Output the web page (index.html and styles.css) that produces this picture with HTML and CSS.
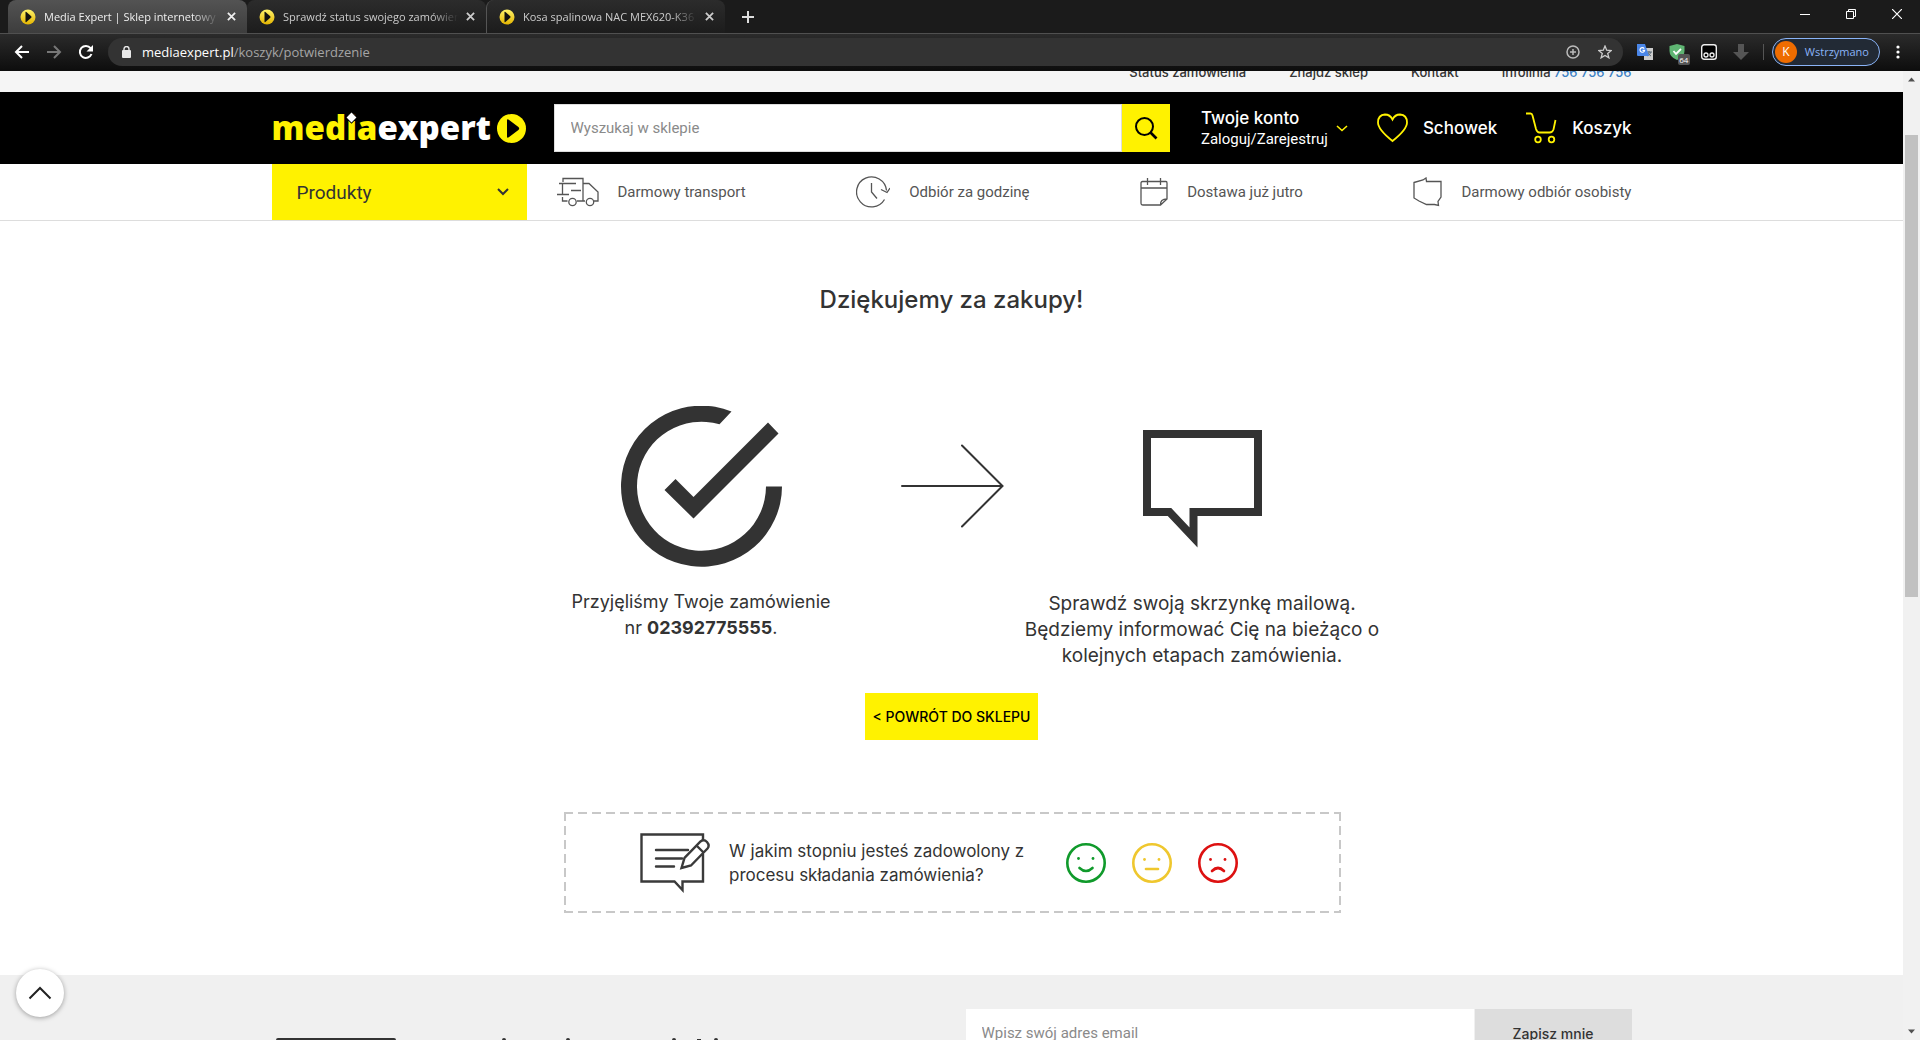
FILE: index.html
```html
<!DOCTYPE html>
<html lang="pl">
<head>
<meta charset="utf-8">
<title>Media Expert | Sklep internetowy</title>
<link rel="stylesheet" href="styles.css">
</head>
<body>
<svg class="defs" width="0" height="0" aria-hidden="true">
  <defs>
    <linearGradient id="gold" x1="0" y1="0" x2="0" y2="1"><stop offset="0" stop-color="#fff36b"/><stop offset="1" stop-color="#e3b400"/></linearGradient>
    <symbol id="favicon" viewBox="0 0 16 16"><circle cx="8" cy="8" r="7.5" fill="url(#gold)"/><path d="M5.5 3.4q0-.9.9-.4l4.8 4.3q.7.7 0 1.400L6.400 13q-.9.500-.9-.4z" fill="#111"/></symbol>
    <symbol id="cross" viewBox="0 0 10 10"><path d="M1 1l8 8M9 1l-8 8" stroke="currentColor" stroke-width="2" fill="none"/></symbol>
  </defs>
</svg>

<div class="browser">
  <div class="tabstrip">
    <div class="tab tab-active"><svg class="favicon"><use href="#favicon"/></svg><span class="tab-title">Media Expert | Sklep internetowy</span><button class="plain" aria-label="Zamknij kartę"><svg width="9" height="9"><use href="#cross"/></svg></button></div>
    <div class="tab"><svg class="favicon"><use href="#favicon"/></svg><span class="tab-title">Sprawdź status swojego zamówienia</span><button class="plain" aria-label="Zamknij kartę"><svg width="9" height="9"><use href="#cross"/></svg></button></div>
    <div class="tab tab-last"><svg class="favicon"><use href="#favicon"/></svg><span class="tab-title">Kosa spalinowa NAC MEX620-K36</span><button class="plain" aria-label="Zamknij kartę"><svg width="9" height="9"><use href="#cross"/></svg></button></div>
    <button class="plain new-tab" aria-label="Nowa karta"><svg width="12" height="12" viewBox="0 0 12 12"><path d="M6 0v12M0 6h12" stroke="#ddd" stroke-width="2"/></svg></button>
    <div class="window-buttons">
      <button class="plain" aria-label="Minimalizuj"><svg width="10" height="10" viewBox="0 0 10 10"><path d="M0 5.500h10" stroke="#fff"/></svg></button>
      <button class="plain" aria-label="Przywróć"><svg width="10" height="10" viewBox="0 0 10 10"><path d="M.5 2.500h7v7h-7zM2.500 2.500v-2h7v7h-2" fill="none" stroke="#fff"/></svg></button>
      <button class="plain" aria-label="Zamknij"><svg width="10" height="10" viewBox="0 0 10 10"><path d="M0 0l10 10M10 0L0 10" stroke="#fff" stroke-width="1.200"/></svg></button>
    </div>
  </div>

  <div class="toolbar">
    <div class="history">
      <button class="plain" aria-label="Wstecz"><svg width="16" height="14" viewBox="0 0 16 14"><path d="M15 7H2M8 1L2 7l6 6" fill="none" stroke="#fff" stroke-width="2"/></svg></button>
      <button class="plain" aria-label="Dalej"><svg width="16" height="14" viewBox="0 0 16 14"><path d="M1 7h13M8 1l6 6-6 6" fill="none" stroke="#777" stroke-width="2"/></svg></button>
      <button class="plain" aria-label="Odśwież"><svg width="16" height="16" viewBox="0 0 16 16"><path d="M13.500 10A6 6 0 1 1 12.600 4.200" fill="none" stroke="#fff" stroke-width="2"/><path d="M15 1v6.500H8.500z" fill="#fff"/></svg></button>
    </div>
    <div class="address">
      <svg width="9" height="12" viewBox="0 0 9 12"><rect y="4" width="9" height="8" rx="1" fill="#e8e8e8"/><path d="M2 5V3a2.500 2.500 0 0 1 5 0v2" fill="none" stroke="#e8e8e8" stroke-width="1.400"/></svg>
      <span class="url"><span class="host">mediaexpert.pl</span>/koszyk/potwierdzenie</span>
      <svg width="14" height="14" viewBox="0 0 14 14"><circle cx="7" cy="7" r="6" fill="none" stroke="#bbb" stroke-width="1.500"/><path d="M7 4v6M4 7h6" stroke="#bbb" stroke-width="1.500"/></svg>
      <svg width="14" height="14" viewBox="0 0 14 14"><path d="M7 1l1.700 4.200 4.500.3-3.500 2.900 1.200 4.400L7 10.400l-3.900 2.400 1.200-4.400L.8 5.500l4.500-.3z" fill="none" stroke="#ccc" stroke-width="1.300"/></svg>
    </div>
    <div class="extensions">
      <svg width="16" height="16" viewBox="0 0 16 16"><rect x="7" y="4" width="9" height="12" fill="#ccc"/><path d="M9 8h6M12 7v2M14 8q-1 3-4 4M11 9q1 2 3 3" stroke="#5b6a75" fill="none"/><path d="M0 0h8l4 12H1q-1 0-1-1z" fill="#4a86e8"/><path d="M7.200 4.600a2.300 2.300 0 1 0 .4 1.700H5.500" fill="none" stroke="#fff" stroke-width="1.200"/></svg>
      <span class="shield"><svg width="16" height="16" viewBox="0 0 16 16"><path d="M8 0l7.500 2v5q0 6-7.500 9Q.5 13 .5 7V2z" fill="#5fb573"/><path d="M4.500 7l2.500 3 5-5" fill="none" stroke="#fff" stroke-width="1.800"/></svg><span class="badge">64</span></span>
      <svg width="16" height="16" viewBox="0 0 16 16"><rect x=".7" y=".7" width="14.600" height="14.600" rx="2.500" fill="#000" stroke="#eee" stroke-width="1.400"/><circle cx="5" cy="11" r="2" fill="none" stroke="#eee" stroke-width="1.300"/><circle cx="11" cy="11" r="2" fill="none" stroke="#eee" stroke-width="1.300"/></svg>
      <svg width="16" height="16" viewBox="0 0 16 16"><path d="M5 0h6v8h5l-8 8-8-8h5z" fill="#555"/></svg>
    </div>
    <button class="profile"><span class="avatar">K</span>Wstrzymano</button>
    <button class="plain" aria-label="Menu"><svg width="4" height="14" viewBox="0 0 4 14"><circle cx="2" cy="2" r="1.600" fill="#fff"/><circle cx="2" cy="7" r="1.600" fill="#fff"/><circle cx="2" cy="12" r="1.600" fill="#fff"/></svg></button>
  </div>
</div>

<div class="viewport">
  <div class="page">
    <div class="topbar"><nav class="wrap topbar-links">
      <a href="#">Status zamówienia</a><a href="#">Znajdź sklep</a><a href="#">Kontakt</a><span>Infolinia <a class="phone" href="tel:756756756">756 756 756</a></span>
    </nav></div>

    <header class="header"><div class="wrap header-row">
      <a class="logo" href="#"><span class="logo-text"><span class="logo-media">med<span class="logo-i">i</span>a</span>expert</span><svg width="29" height="29" viewBox="0 0 29 29"><circle cx="14.500" cy="14.500" r="14.500" fill="#fff200"/><path d="M10 6.500q0-2 1.800-.8l9.600 7.300q1.600 1.500 0 3l-9.600 7.300q-1.800 1.200-1.800-.8z" fill="#000"/></svg></a>
      <form class="search">
        <input type="text" placeholder="Wyszukaj w sklepie" aria-label="Wyszukaj w sklepie">
        <button type="button" aria-label="Szukaj"><svg width="24" height="24" viewBox="0 0 24 24"><circle cx="10.500" cy="10.500" r="8.500" fill="none" stroke="#000" stroke-width="2"/><path d="M16.500 16.500l6 6" stroke="#000" stroke-width="2.600"/></svg></button>
      </form>
      <a class="account" href="#"><span><b>Twoje konto</b><small>Zaloguj/Zarejestruj</small></span><svg width="12" height="7" viewBox="0 0 12 7"><path d="M1 1l5 4.500L11 1" fill="none" stroke="#fff200" stroke-width="1.600"/></svg></a>
      <a class="shortcut" href="#"><svg width="31" height="30" viewBox="0 0 31 30"><path d="M15.500 28Q1 16.500 1 9.500 1 2 8 1.500q5 0 7.500 5Q18 1.500 23 1.500 30 2 30 9.500q0 7-14.500 18.500z" fill="none" stroke="#fff200" stroke-width="1.800"/></svg>Schowek</a>
      <a class="shortcut" href="#"><svg width="31" height="32" viewBox="0 0 31 32"><path d="M0 1.500h4.500q1.500 0 2 2l3.500 13.500q1 3.500 3.500 3.500h10q3 0 4-3l2-9.500" fill="none" stroke="#fff200" stroke-width="1.800"/><circle cx="12" cy="27.500" r="2.800" fill="none" stroke="#fff200" stroke-width="1.800"/><circle cx="25.500" cy="27.500" r="2.800" fill="none" stroke="#fff200" stroke-width="1.800"/></svg>Koszyk</a>
    </div></header>

    <div class="navbar"><div class="wrap navbar-row">
      <button class="products">Produkty<svg width="12" height="8" viewBox="0 0 12 8"><path d="M1 1l5 5 5-5" fill="none" stroke="#333" stroke-width="2"/></svg></button>
      <ul class="benefits">
        <li><svg width="42" height="30" viewBox="0 0 42 30"><path d="M6 5V1.500h20v22.500M2 6.500h17M5.500 6.500v11M0 17.500h12M14 13.500h10M5.500 20V24h5M20 24h8M26 6.500h6l9 8.500v9h-4" fill="none" stroke="#555" stroke-width="1.300"/><circle cx="15.500" cy="25" r="3.700" fill="#fff" stroke="#555" stroke-width="1.300"/><circle cx="33" cy="25" r="3.700" fill="#fff" stroke="#555" stroke-width="1.300"/></svg>Darmowy transport</li>
        <li><svg width="34" height="32" viewBox="0 0 34 32"><path d="M28.500 23.500A15 15 0 1 1 30.500 14.500M25 13.500l6 3 3-4.500M15.500 7v9l5.500 6.500" fill="none" stroke="#555" stroke-width="1.300"/></svg>Odbiór za godzinę</li>
        <li><svg width="28" height="28" viewBox="0 0 28 28"><path d="M1 25V5q0-1.500 1.500-1.500H26q1 0 1 1.500v16l-6.500 6H3q-2 0-2-2zM1 10h26M7.500 0v7M20.500 0v7M20.500 27q-.5-6 6.500-6" fill="none" stroke="#555" stroke-width="1.300"/></svg>Dostawa już jutro</li>
        <li><svg width="29" height="30" viewBox="0 0 29 30"><path d="M1 5.500L10 3l3-2 .500 3.500h14.500v15.500l-3 4.500.500 4-4-1h-8L6 24l-5-3z" fill="none" stroke="#555" stroke-width="1.300"/></svg>Darmowy odbiór osobisty</li>
      </ul>
    </div></div>

    <main class="main">
      <h1>Dziękujemy za zakupy!</h1>
      <div class="steps">
        <section class="step">
          <div class="step-art"><svg width="161" height="161" viewBox="0 0 161 161" fill="#333"><path d="M110.500 5.500A80.500 80.500 0 1 0 161 80.500H145A64.500 64.500 0 1 1 98.500 18.300z"/><path d="M147 16.500l10.500 11L72.500 112.500 43.500 84l11-11 18 18z"/></svg></div>
          <p>Przyjęliśmy Twoje zamówienie<br>nr <b>02392775555</b>.</p>
        </section>
        <svg class="arrow" width="103" height="84" viewBox="0 0 103 84"><path d="M1 42h100M61 1.500L101.500 42 61 82.500" fill="none" stroke="#333" stroke-width="2" stroke-linecap="round"/></svg>
        <section class="step step-mail">
          <div class="step-art"><svg width="119" height="118" viewBox="0 0 119 118"><path d="M4 4h111v78H50.500v25.500L26.500 82H4z" fill="none" stroke="#333" stroke-width="8"/></svg></div>
          <p>Sprawdź swoją skrzynkę mailową.<br>Będziemy informować Cię na bieżąco o<br>kolejnych etapach zamówienia.</p>
        </section>
      </div>
      <a class="back" href="#">&lt; POWRÓT DO SKLEPU</a>
      <section class="survey">
        <svg width="70" height="60" viewBox="0 0 70 60" fill="none" stroke="#3a3a3a" stroke-width="2.400" stroke-linecap="round"><path d="M63 8.500V1.500H1.500v47h33l8 8.500v-8.500H63V21" stroke-linecap="butt" stroke-linejoin="miter"/><path d="M16 17h32M16 25.500h26M16 33.500h18"/><path d="M41.500 35l3-10L60.500 8.500q3.500-2.500 6.500.5 3 3.500.5 6.500L51 32.500zM56.500 12.500l7 7" fill="#fff"/></svg>
        <p>W jakim stopniu jesteś zadowolony z<br>procesu składania zamówienia?</p>
        <div class="faces">
          <button class="plain face-good" aria-label="Zadowolony"><svg width="40" height="40" viewBox="0 0 40 40" fill="none" stroke="currentColor" stroke-width="2.600"><circle cx="20" cy="20" r="18.700"/><path d="M13.500 25q6.500 6 13 0" stroke-linecap="round"/><circle cx="12.500" cy="15.500" r="1.400" fill="currentColor" stroke="none"/><circle cx="27" cy="15.500" r="1.400" fill="currentColor" stroke="none"/></svg></button>
          <button class="plain face-ok" aria-label="Neutralny"><svg width="40" height="40" viewBox="0 0 40 40" fill="none" stroke="currentColor" stroke-width="2.600"><circle cx="20" cy="20" r="18.700"/><path d="M14 26h12" stroke-linecap="round"/><circle cx="12.500" cy="16.500" r="1.400" fill="currentColor" stroke="none"/><circle cx="27" cy="16.500" r="1.400" fill="currentColor" stroke="none"/></svg></button>
          <button class="plain face-bad" aria-label="Niezadowolony"><svg width="40" height="40" viewBox="0 0 40 40" fill="none" stroke="currentColor" stroke-width="2.600"><circle cx="20" cy="20" r="18.700"/><path d="M14 28q6-6 12 0" stroke-linecap="round"/><circle cx="12.500" cy="16.500" r="1.400" fill="currentColor" stroke="none"/><circle cx="27" cy="16.500" r="1.400" fill="currentColor" stroke="none"/></svg></button>
        </div>
      </section>
    </main>

    <footer class="newsletter"><div class="wrap newsletter-row">
      <svg class="newsletter-art" width="454" height="60" viewBox="0 0 454 60"><rect x="5" y="1" width="118" height="70" rx="1" fill="none" stroke="#333" stroke-width="2"/><g fill="#333"><circle cx="232" cy="2" r="2"/><circle cx="296" cy="2" r="2"/><circle cx="402" cy="2" r="2"/><path d="M425 1h4v1h-4z"/><circle cx="444" cy="2" r="2"/></g></svg>
      <form class="subscribe">
        <input type="email" placeholder="Wpisz swój adres email" aria-label="Wpisz swój adres email">
        <button type="button">Zapisz mnie</button>
      </form>
    </div></footer>
  </div>

  <div class="scrollbar" aria-hidden="true">
    <svg width="17" height="17" viewBox="0 0 17 17"><path d="M5 10.500l3.500-4 3.500 4z" fill="#505050"/></svg>
    <div class="track"><div class="thumb"></div></div>
    <svg width="17" height="17" viewBox="0 0 17 17"><path d="M5 6.500l3.500 4 3.500-4z" fill="#505050"/></svg>
  </div>
  <button class="to-top" aria-label="Do góry"><svg width="24" height="14" viewBox="0 0 24 14"><path d="M1.500 12.500L12 2l10.500 10.500" fill="none" stroke="#222" stroke-width="2"/></svg></button>
</div>
</body>
</html>
```
FILE: styles.css
```css
* { box-sizing: border-box; }
body {
  margin: 0;
  height: 100vh;
  display: flex;
  flex-direction: column;
  overflow: hidden;
  font-family: Inter, "Open Sans", sans-serif;
  color: #333;
  background: #fff;
}
svg { display: block; flex: none; }
a { color: inherit; text-decoration: none; }
p, h1, ul { margin: 0; padding: 0; }
button { font: inherit; color: inherit; cursor: pointer; }
.defs { position: absolute; }
.plain { display: block; flex: none; border: 0; padding: 0; background: none; }

/* browser frame */
.browser { flex: none; font-family: "Open Sans", sans-serif; }
.tabstrip {
  display: flex;
  align-items: flex-end;
  height: 33px;
  padding-left: 8px;
  background: #1b1b1b;
  color: #ccc;
}
.tab {
  display: flex;
  align-items: center;
  gap: 8px;
  width: 239px;
  height: 33px;
  padding: 0 11px 0 12px;
  border-radius: 8px 8px 0 0;
  background: linear-gradient(#2c2c2c, #1c1c1c);
  font-size: 11px;
}
.tab-active { background: linear-gradient(#535353, #3d3d3d); color: #eee; }
.tab-last { border-left: 1px solid #555; }
.favicon { width: 16px; height: 16px; }
.tab-title {
  flex: 1;
  overflow: hidden;
  white-space: nowrap;
  mask-image: linear-gradient(90deg, #000 85%, transparent);
}
.new-tab { align-self: center; margin-left: 17px; }
.window-buttons { display: flex; gap: 36px; margin: 0 18px 14px auto; }
.toolbar {
  display: flex;
  align-items: center;
  height: 38px;
  padding: 0 20px 2px 14px;
  border-top: 1px solid #505050;
  background: linear-gradient(#2b2b2b, #0d0d0d);
}
.history { display: flex; align-items: center; gap: 16px; margin-right: 14px; }
.address {
  flex: 1;
  display: flex;
  align-items: center;
  gap: 18px;
  height: 28px;
  padding: 0 11px 0 14px;
  border-radius: 14px;
  background: #333;
}
.url { flex: 1; margin-left: -7px; font-size: 13px; color: #a5a5a5; }
.host { color: #fff; }
.extensions {
  display: flex;
  gap: 16px;
  margin-left: 14px;
  padding-right: 14px;
  border-right: 1px solid #555;
}
.shield { position: relative; }
.badge {
  position: absolute;
  left: 9px;
  top: 10px;
  width: 12px;
  border-radius: 2px;
  background: #555;
  color: #fff;
  font-size: 8px;
  line-height: 11px;
  text-align: center;
}
.profile {
  display: flex;
  align-items: center;
  gap: 8px;
  height: 28px;
  margin: 0 16px 0 8px;
  padding: 0 10px 0 2px;
  border: 1px solid #8ab4f8;
  border-radius: 14px;
  background: #222a35;
  color: #8ab4f8;
  font-size: 11px;
}
.avatar {
  width: 22px;
  height: 22px;
  border-radius: 50%;
  background: #ee6c00;
  color: #fff;
  font-size: 12px;
  line-height: 22px;
}

/* page area */
.viewport { position: relative; flex: 1; min-height: 0; display: flex; overflow: hidden; }
.page { flex: 1; min-width: 0; }
.wrap { max-width: 1360px; margin: 0 auto; }
.topbar { height: 21px; overflow: hidden; background: #f5f5f5; }
.topbar-links {
  display: flex;
  justify-content: flex-end;
  gap: 43px;
  margin-top: -9px;
  font-size: 13px;
  font-weight: 500;
  line-height: 20px;
}
.phone { color: #3b7fc4; }

.header { background: #000; color: #fff; }
.header-row { display: flex; align-items: center; height: 72px; }
.logo { display: flex; align-items: center; gap: 6px; width: 282px; }
.logo-text { font: 800 33px/40px "Open Sans", sans-serif; }
.logo-media { color: #fff200; }
.logo-i { position: relative; }
.logo-i::before {
  content: "";
  position: absolute;
  left: 2px;
  top: 9px;
  width: 7px;
  height: 7px;
  background: #fff;
  box-shadow: 0 0 0 1px #000;
  transform: rotate(45deg);
}
.search { flex: 1; display: flex; height: 48px; }
.search input {
  flex: 1;
  min-width: 0;
  padding: 0 16px;
  border: 1px solid #ddd;
  font: 15px Roboto, sans-serif;
}
input::placeholder { color: #8a8a8a; opacity: 1; }
.search button {
  display: grid;
  place-items: center;
  width: 48px;
  padding: 0;
  border: 0;
  background: #fff200;
}
.account { display: flex; align-items: center; gap: 8px; margin-left: 31px; }
.account b { display: block; font-size: 17px; font-weight: 500; line-height: 22px; }
.account small { display: block; font: 15px/20px Roboto, sans-serif; }
.shortcut {
  display: flex;
  align-items: center;
  gap: 15px;
  margin-left: 29px;
  font-size: 17px;
  font-weight: 500;
}

.navbar { border-bottom: 1px solid #ddd; }
.navbar-row { display: flex; height: 56px; font-family: Roboto, sans-serif; }
.products {
  display: flex;
  align-items: center;
  justify-content: space-between;
  width: 255px;
  padding: 0 18px 0 25px;
  border: 0;
  background: #fff200;
  font-size: 19px;
}
.benefits {
  flex: 1;
  display: flex;
  align-items: center;
  justify-content: space-between;
  padding-left: 30px;
  list-style: none;
  font-size: 15px;
  color: #555;
}
.benefits li { display: flex; align-items: center; gap: 19px; }

.main { display: flex; flex-direction: column; align-items: center; padding: 63px 0 62px; }
h1 { font-size: 24px; font-weight: 500; line-height: 32px; }
.steps { display: flex; justify-content: center; margin-top: 80px; }
.step { display: flex; flex-direction: column; align-items: center; width: 356px; }
.step-art { display: grid; place-items: center; height: 180px; }
.step p { margin-top: 13px; font-size: 18px; line-height: 26px; text-align: center; white-space: nowrap; }
.step-mail .step-art { height: 186px; }
.step-mail p { margin-top: 9px; font-size: 19px; }
.arrow { margin: 48px 20px 0 22px; }
.back {
  margin-top: 24px;
  padding: 0 8px;
  background: #fff200;
  color: #000;
  font-size: 14px;
  font-weight: 500;
  line-height: 47px;
}
.survey {
  display: flex;
  align-items: center;
  width: 777px;
  height: 101px;
  margin: 72px 0 0 2px;
  padding: 0 76px;
  --dash: #c8c8c8 0 9px, transparent 9px 14px;
  background:
    repeating-linear-gradient(90deg, var(--dash)) 0 0 / 100% 2px no-repeat,
    repeating-linear-gradient(90deg, var(--dash)) 0 100% / 100% 2px no-repeat,
    repeating-linear-gradient(var(--dash)) 0 0 / 2px 100% no-repeat,
    repeating-linear-gradient(var(--dash)) 100% 0 / 2px 100% no-repeat;
}
.survey p { flex: 1; margin-left: 19px; font-size: 17px; line-height: 24px; }
.faces { display: flex; gap: 26px; margin-right: 27px; }
.face-good { color: #109a2b; }
.face-ok { color: #efc72e; }
.face-bad { color: #dd1111; }

.newsletter { min-height: 120px; padding-top: 34px; background: #f0f0f0; }
.newsletter-row { display: flex; justify-content: space-between; align-items: flex-start; }
.newsletter-art { margin-top: 29px; }
.subscribe { display: flex; gap: 1px; width: 666px; height: 48px; }
.subscribe input { flex: 1; min-width: 0; padding: 0 16px; border: 0; font: 15px Roboto, sans-serif; }
.subscribe button { width: 157px; padding: 0; border: 0; background: #ddd; font-size: 14px; font-weight: 500; }

.scrollbar { display: flex; flex-direction: column; width: 17px; background: #f1f1f1; }
.track { flex: 1; padding: 47px 2px 0; }
.thumb { height: 52%; background: #c1c1c1; }
.to-top {
  position: absolute;
  left: 16px;
  bottom: 23px;
  display: grid;
  place-items: center;
  width: 48px;
  height: 48px;
  padding: 0;
  border: 0;
  border-radius: 50%;
  background: #fff;
  box-shadow: 0 1px 5px rgba(0, 0, 0, .35);
}
```
